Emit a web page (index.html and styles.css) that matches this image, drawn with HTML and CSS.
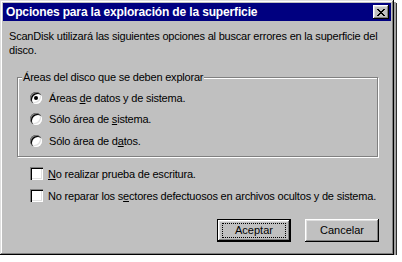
FILE: index.html
```html
<!DOCTYPE html>
<html><head>
<meta charset="UTF-8">
<link rel="stylesheet" href="styles.css">
<title>Opciones para la exploración de la superficie</title>
</head>
<body>
<div class="window">
 <div class="titlebar">
  <span class="title">Opciones para la exploración de la superficie</span>
  <button class="close" type="button">
   <svg width="8" height="7" viewBox="0 0 8 7" shape-rendering="crispEdges">
    <path d="M0 0h2v1h-2zM6 0h2v1h-2zM1 1h2v1h-2zM5 1h2v1h-2zM2 2h4v1h-4zM3 3h2v1h-2zM2 4h4v1h-4zM1 5h2v1h-2zM5 5h2v1h-2zM0 6h2v1h-2zM6 6h2v1h-2z" fill="#000"/>
   </svg>
  </button>
 </div>
 <div class="content">
  <p class="intro">ScanDisk utilizará las siguientes opciones al buscar errores en la superficie del disco.</p>
  <fieldset class="group">
   <legend>Áreas del disco que se deben explorar</legend>
   <div class="option"><span class="radio checked"></span><span>Áreas <u>d</u>e datos y de sistema.</span></div>
   <div class="option"><span class="radio"></span><span>Sólo área de <u>s</u>istema.</span></div>
   <div class="option"><span class="radio"></span><span>Sólo área de d<u>a</u>tos.</span></div>
  </fieldset>
  <div class="checks">
   <div class="option"><span class="check"></span><span><u>N</u>o realizar prueba de escritura.</span></div>
   <div class="option"><span class="check"></span><span>No reparar los s<u>e</u>ctores defectuosos en archivos ocultos y de sistema.</span></div>
  </div>
  <div class="buttons">
   <button class="btn default" type="button"><span class="focus">Aceptar</span></button>
   <button class="btn" type="button"><span>Cancelar</span></button>
  </div>
 </div>
</div>
</body></html>
```

FILE: styles.css
```css
:root {
  font-family: "Liberation Sans", Arial, sans-serif;
  font-size: 11px;
  letter-spacing: -0.2px;
}
body {
  margin: 0;
  background: #fff;
}
.window {
  box-sizing: border-box;
  width: 394px;
  height: 255px;
  padding: 3px;
  background: #c0c0c0;
  box-shadow: inset -1px -1px #000, inset 1px 1px #dfdfdf,
              inset -2px -2px #808080, inset 2px 2px #fff,
              2px 2px 0 #a0a0a0, 3px 3px 0 #303030;
  display: flex;
  flex-direction: column;
}
.titlebar {
  height: 18px;
  background: #000080;
  color: #fff;
  display: flex;
  align-items: center;
  justify-content: space-between;
  padding: 0 2px 0 3px;
}
.title {
  font-weight: bold;
  font-size: 12px;
  letter-spacing: -0.15px;
}
.close {
  box-sizing: border-box;
  width: 16px;
  height: 14px;
  padding: 0;
  border: 0;
  background: #c0c0c0;
  box-shadow: inset -1px -1px #000, inset 1px 1px #fff,
              inset -2px -2px #808080, inset 2px 2px #dfdfdf;
  display: flex;
  align-items: center;
  justify-content: center;
}
.close svg {
  display: block;
}
.content {
  padding: 8px 6px 0 6px;
  line-height: 14px;
}
.intro {
  margin: 0;
  color: #000;
}
.group {
  box-sizing: border-box;
  width: 361px;
  margin: 13px 0 0 8px;
  padding: 3px 0 4px 12px;
  border: 1px solid #808080;
  box-shadow: inset 1px 1px #fff, 1px 1px 0 #fff;
}
.group legend {
  padding: 0 1px;
  margin-left: -8px;
  background: #c0c0c0;
}
.option {
  height: 21.5px;
  display: flex;
  align-items: center;
  white-space: nowrap;
}
.radio {
  box-sizing: border-box;
  width: 12px;
  height: 12px;
  margin-right: 7px;
  border-radius: 50%;
  background: #fff;
  box-shadow: inset 1px 1px #808080, inset 2px 2px #000,
              inset -1px -1px #fff, inset -2px -2px #dfdfdf;
  display: flex;
  align-items: center;
  justify-content: center;
}
.radio.checked::after {
  content: "";
  width: 4px;
  height: 4px;
  border-radius: 50%;
  background: #000;
}
.checks {
  margin: 6px 0 0 21px;
}
.checks .option {
  height: 22px;
}
.check {
  box-sizing: border-box;
  width: 13px;
  height: 13px;
  margin-right: 5px;
  background: #fff;
  box-shadow: inset 1px 1px #808080, inset 2px 2px #000,
              inset -1px -1px #fff, inset -2px -2px #dfdfdf;
}
.buttons {
  display: flex;
  justify-content: flex-end;
  gap: 14px;
  margin: 12px 6px 0 0;
}
.btn {
  box-sizing: border-box;
  width: 74px;
  height: 23px;
  padding: 0;
  border: 0;
  background: #c0c0c0;
  font: inherit;
  color: #000;
  box-shadow: inset -1px -1px #000, inset 1px 1px #fff,
              inset -2px -2px #808080, inset 2px 2px #dfdfdf;
  display: flex;
  align-items: center;
  justify-content: center;
}
.btn.default {
  box-shadow: inset 0 0 0 1px #000, inset -2px -2px #000, inset 2px 2px #fff,
              inset -3px -3px #808080, inset 3px 3px #dfdfdf;
}
.btn .focus {
  box-sizing: border-box;
  width: 64px;
  height: 15px;
  line-height: 13px;
  border: 1px dotted #000;
  text-align: center;
}
```
